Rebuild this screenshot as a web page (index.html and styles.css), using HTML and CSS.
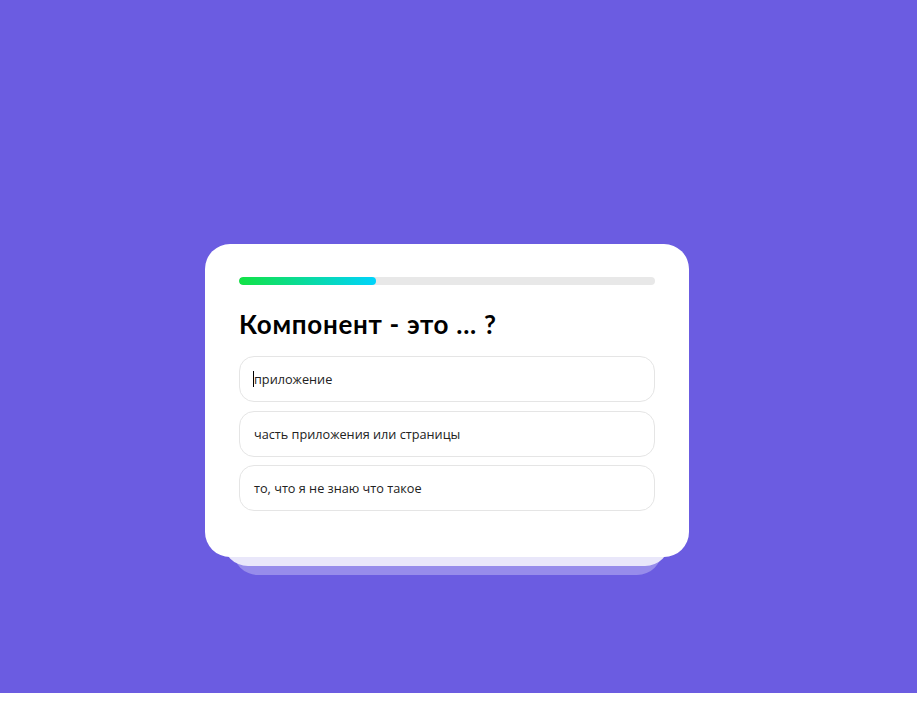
FILE: index.html
```html
<!DOCTYPE html>
<html lang="ru">
<head>
<meta charset="utf-8">
<link rel="stylesheet" href="styles.css">
</head>
<body>
<div class="stage">
  <div class="card">
    <div class="progress"><div class="progress-fill" style="width:33%"></div></div>
    <h1 class="title">Компонент - это ... ?</h1>
    <ul class="answers">
      <li class="answer"><span class="caret"></span>приложение</li>
      <li class="answer">часть приложения или страницы</li>
      <li class="answer">то, что я не знаю что такое</li>
    </ul>
  </div>
</div>
</body>
</html>
```
FILE: styles.css
```css
html, body { margin: 0; padding: 0; background: #fff; }
.stage {
  position: relative;
  z-index: 0;
  height: 693px;
  background: #6b5ce1;
  box-sizing: border-box;
  padding: 244px 0 0 205px;
}
.card {
  position: relative;
  width: 484px;
  box-sizing: border-box;
  background: #fff;
  border-radius: 25px;
  padding: 33px 34px 46px;
}
.card::before, .card::after {
  content: "";
  position: absolute;
  z-index: -1;
  border-radius: 25px;
  height: 60px;
}
.card::before { left: 18px; right: 19px; bottom: -9px; background: #e9e7fa; }
.card::after { left: 28px; right: 27px; bottom: -18px; background: #978ceb; z-index: -2; }
.progress {
  height: 8px;
  border-radius: 4px;
  background: #e8e8e8;
  overflow: hidden;
}
.progress-fill {
  height: 100%;
  border-radius: 4px;
  background: linear-gradient(90deg, #12e245, #00d3fc);
}
.title {
  margin: 22px 0 15px;
  font-family: "Lato", sans-serif;
  font-weight: 700;
  font-size: 26px;
  line-height: 34px;
  letter-spacing: 0.7px;
  color: #000;
}
.answers {
  list-style: none;
  margin: 0;
  padding: 0;
  display: flex;
  flex-direction: column;
  gap: 8.5px;
}
.answer {
  position: relative;
  height: 46px;
  box-sizing: border-box;
  border: 1px solid #e5e5e5;
  border-radius: 15px;
  padding: 0 14px;
  display: flex;
  align-items: center;
  font-family: "Open Sans", sans-serif;
  font-size: 12.7px;
  color: #222;
}
.caret {
  position: absolute;
  left: 13px;
  top: 14px;
  width: 1px;
  height: 16px;
  background: #000;
}
```
